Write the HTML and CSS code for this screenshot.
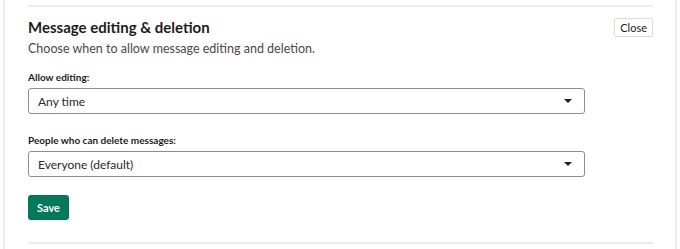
FILE: index.html
```html
<!DOCTYPE html>
<html lang="en">
<head>
    <meta charset="UTF-8">
    <title>Message editing &amp; deletion</title>
    <link rel="stylesheet" href="styles.css">
</head>
<body>
    <div class="frame">
        <div class="setting">
            <div class="setting-header">
                <div>
                    <h2 class="setting-title">Message editing &amp; deletion</h2>
                    <p class="setting-desc">Choose when to allow message editing and deletion.</p>
                </div>
                <button class="btn-close">Close</button>
            </div>

            <label class="field-label" for="edit">Allow editing:</label>
            <div class="select">
                <span id="edit">Any time</span>
                <span class="caret"></span>
            </div>

            <label class="field-label" for="del">People who can delete messages:</label>
            <div class="select">
                <span id="del">Everyone (default)</span>
                <span class="caret"></span>
            </div>

            <button class="btn-save">Save</button>
        </div>
    </div>
</body>
</html>
```

FILE: styles.css
```css
*
{
    box-sizing: border-box;
}
body
{
    margin: 0;
    background: #fff;
    font-family: Lato, "Noto Sans", sans-serif;
    color: #1d1c1d;
}
.frame
{
    margin-left: 3px;
    width: 674px;
    height: 249px;
    border-left: 2px solid #ececec;
    border-right: 2px solid #ececec;
    padding-top: 5px;
}
.setting
{
    margin: 0 22px 0 23px;
    border-top: 2px solid #ececec;
    border-bottom: 2px solid #ececec;
    padding: 9px 0 22px;
}
.setting-header
{
    display: flex;
    justify-content: space-between;
    align-items: flex-start;
    margin-bottom: 10px;
}
.setting-title
{
    margin: 0;
    font-size: 15px;
    font-weight: 700;
    line-height: 22px;
}
.setting-desc
{
    margin: 1px 0 0;
    font-size: 12.5px;
    color: #4a484a;
    line-height: 20px;
}
.btn-close
{
    margin-top: 2px;
    height: 19px;
    padding: 0 5px;
    border: 1px solid #dcdcdc;
    border-radius: 2px;
    background: #fff;
    font-family: inherit;
    font-size: 11px;
    color: #1d1c1d;
}
.field-label
{
    display: block;
    font-size: 10px;
    font-weight: 700;
    line-height: 16px;
}
.select + .field-label
{
    margin-top: 18px;
}
.select
{
    display: flex;
    align-items: center;
    justify-content: space-between;
    width: 557px;
    height: 26px;
    margin-top: 3px;
    padding: 0 12px 0 9px;
    border: 1px solid #8d8d8d;
    border-radius: 3px;
    font-size: 12px;
    color: #2a282a;
}
.caret
{
    width: 0;
    height: 0;
    border-left: 4px solid transparent;
    border-right: 4px solid transparent;
    border-top: 4px solid #1d1c1d;
}
.btn-save
{
    display: block;
    margin-top: 18px;
    height: 25px;
    padding: 0 9px;
    border: none;
    border-radius: 3px;
    background: #007a5a;
    color: #fff;
    font-family: inherit;
    font-size: 11px;
    font-weight: 700;
}
```
